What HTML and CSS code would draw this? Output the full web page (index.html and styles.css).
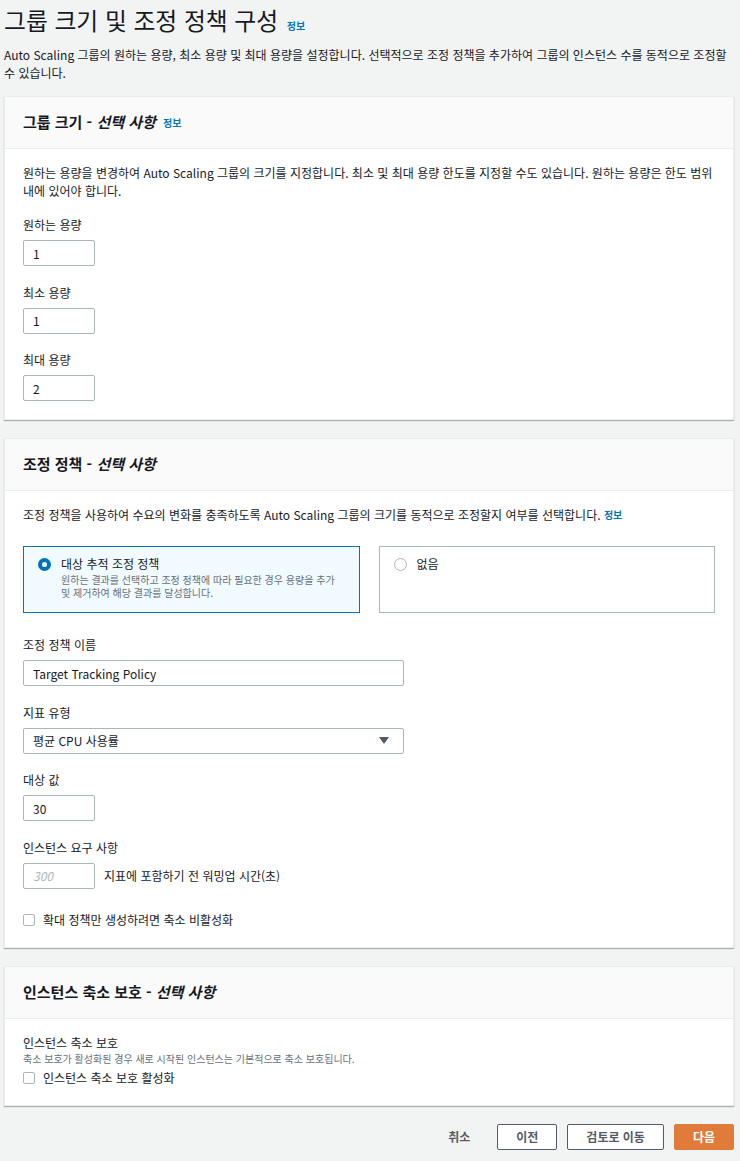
FILE: index.html
```html
<!DOCTYPE html>
<html lang="ko">
<head>
  <meta charset="UTF-8" />
  <meta name="viewport" content="width=device-width, initial-scale=1.0"/>
  <title>그룹 크기 및 조정 정책 구성</title>
  <link rel="stylesheet" href="styles.css">
</head>
<body>
  <div class="page">
    <h1 class="page-title">그룹 크기 및 조정 정책 구성 <a class="info" href="#">정보</a></h1>
    <p class="page-desc">Auto Scaling 그룹의 원하는 용량, 최소 용량 및 최대 용량을 설정합니다. 선택적으로 조정 정책을 추가하여 그룹의 인스턴스 수를 동적으로 조정할 수 있습니다.</p>

    <section class="card">
      <div class="card-header">
        <h2>그룹 크기 - <em>선택 사항</em> <a class="info" href="#">정보</a></h2>
      </div>
      <div class="card-body">
        <p class="desc">원하는 용량을 변경하여 Auto Scaling 그룹의 크기를 지정합니다. 최소 및 최대 용량 한도를 지정할 수도 있습니다. 원하는 용량은 한도 범위 내에 있어야 합니다.</p>
        <div class="field">
          <label>원하는 용량</label>
          <input class="input short" type="text" value="1">
        </div>
        <div class="field">
          <label>최소 용량</label>
          <input class="input short" type="text" value="1">
        </div>
        <div class="field">
          <label>최대 용량</label>
          <input class="input short" type="text" value="2">
        </div>
      </div>
    </section>

    <section class="card">
      <div class="card-header">
        <h2>조정 정책 - <em>선택 사항</em></h2>
      </div>
      <div class="card-body">
        <p class="desc">조정 정책을 사용하여 수요의 변화를 충족하도록 Auto Scaling 그룹의 크기를 동적으로 조정할지 여부를 선택합니다. <a class="info" href="#">정보</a></p>

        <div class="tiles">
          <div class="tile selected">
            <span class="radio on"></span>
            <div>
              <div class="tile-title">대상 추적 조정 정책</div>
              <div class="tile-desc">원하는 결과를 선택하고 조정 정책에 따라 필요한 경우 용량을 추가 및 제거하여 해당 결과를 달성합니다.</div>
            </div>
          </div>
          <div class="tile">
            <span class="radio"></span>
            <div>
              <div class="tile-title">없음</div>
            </div>
          </div>
        </div>

        <div class="field after-tiles">
          <label>조정 정책 이름</label>
          <input class="input wide" type="text" value="Target Tracking Policy">
        </div>
        <div class="field">
          <label>지표 유형</label>
          <div class="select wide">
            <span>평균 CPU 사용률</span>
            <span class="caret"></span>
          </div>
        </div>
        <div class="field">
          <label>대상 값</label>
          <input class="input short" type="text" value="30">
        </div>
        <div class="field">
          <label>인스턴스 요구 사항</label>
          <div class="inline">
            <input class="input short" type="text" placeholder="300">
            <span>지표에 포함하기 전 워밍업 시간(초)</span>
          </div>
        </div>
        <label class="check spaced"><span class="box"></span>확대 정책만 생성하려면 축소 비활성화</label>
      </div>
    </section>

    <section class="card">
      <div class="card-header">
        <h2>인스턴스 축소 보호 - <em>선택 사항</em></h2>
      </div>
      <div class="card-body">
        <div class="label">인스턴스 축소 보호</div>
        <div class="hint">축소 보호가 활성화된 경우 새로 시작된 인스턴스는 기본적으로 축소 보호됩니다.</div>
        <label class="check"><span class="box"></span>인스턴스 축소 보호 활성화</label>
      </div>
    </section>

    <div class="actions">
      <button class="btn link">취소</button>
      <button class="btn normal">이전</button>
      <button class="btn normal">검토로 이동</button>
      <button class="btn primary">다음</button>
    </div>
  </div>
</body>
</html>
```

FILE: styles.css
```css
:root {
  --bg: #f2f3f3;
  --text: #16191f;
  --muted: #687078;
  --border: #aab7b8;
  --blue: #0073bb;
  --orange: #e07b39;
}

body {
  margin: 0;
  background-color: var(--bg);
  color: var(--text);
  font-family: "Noto Sans CJK KR", "Noto Sans", sans-serif;
  font-size: 12px;
  line-height: 18px;
}

.page {
  padding: 0 6px 12px 4px;
}

.page-title {
  margin: 0;
  font-size: 23.8px;
  line-height: 40px;
  height: 40px;
  font-weight: 400;
}

.info {
  color: var(--blue);
  font-size: 10px;
  line-height: 1;
  font-weight: 700;
  text-decoration: none;
  vertical-align: 1px;
}

.page-title .info {
  margin-left: 2px;
  vertical-align: 0;
}

.page-desc {
  margin: 6px 0 14px;
}

.card {
  background-color: #fff;
  border: 1px solid #eaeded;
  box-shadow: 0 1px 1px rgba(0, 28, 36, 0.3);
  margin-bottom: 18px;
}

.card-header {
  background-color: #fafafa;
  border-bottom: 1px solid #eaeded;
  padding: 16px 18px 17px;
}

.card-header h2 {
  margin: 0;
  height: 18px;
  font-size: 15px;
  line-height: 18px;
  font-weight: 700;
}

.card-header .info {
  margin-left: 3px;
}

.card-body {
  padding: 15px 18px 18px;
}

.desc {
  margin: 0;
}

.field {
  margin-top: 16px;
}

.field + .field {
  margin-top: 17.5px;
}

.field.after-tiles {
  margin-top: 23px;
}

.field label,
.label {
  display: block;
}

.field label {
  margin-bottom: 6px;
}

.input {
  box-sizing: border-box;
  display: block;
  height: 26px;
  border: 1px solid var(--border);
  border-radius: 2px;
  padding: 0 9px;
  font-family: inherit;
  font-size: 12px;
  color: var(--text);
  background: #fff;
}

.input::placeholder {
  color: #aab7b8;
  font-style: italic;
}

.short {
  width: 72px;
}

.wide {
  width: 381px;
}

.select {
  box-sizing: border-box;
  height: 26px;
  border: 1px solid var(--border);
  border-radius: 2px;
  padding: 0 9px;
  display: flex;
  align-items: center;
  justify-content: space-between;
}

.caret {
  width: 0;
  height: 0;
  border-left: 5px solid transparent;
  border-right: 5px solid transparent;
  border-top: 7px solid #545b64;
  margin-right: 5px;
}

.inline {
  display: flex;
  align-items: center;
  gap: 9px;
}

.tiles {
  display: grid;
  grid-template-columns: 1fr 1fr;
  gap: 19px;
  margin-top: 22px;
}

.tile {
  display: flex;
  align-items: flex-start;
  gap: 10px;
  height: 67px;
  box-sizing: border-box;
  border: 1px solid var(--border);
  padding: 8px 14px;
  background: #fff;
}

.tile.selected {
  border-color: var(--blue);
  background-color: #f1faff;
}

.radio {
  flex: none;
  box-sizing: border-box;
  width: 13px;
  height: 13px;
  border-radius: 50%;
  border: 1px solid var(--border);
  background: #fff;
  margin-top: 3px;
}

.radio.on {
  border: 4px solid var(--blue);
}

.tile-desc {
  color: var(--muted);
  font-size: 10px;
  line-height: 13px;
}

.check {
  display: flex;
  align-items: center;
  gap: 8px;
}

.check.spaced {
  margin-top: 22px;
}

.box {
  box-sizing: border-box;
  width: 12px;
  height: 12px;
  border: 1px solid var(--border);
  border-radius: 2px;
  background: #fff;
}

.hint {
  color: var(--muted);
  font-size: 10px;
  line-height: 13px;
  margin-bottom: 4px;
}

.actions {
  display: flex;
  justify-content: flex-end;
  align-items: center;
  gap: 10px;
}

.btn {
  height: 26px;
  box-sizing: border-box;
  border-radius: 2px;
  font-family: inherit;
  font-size: 12px;
  font-weight: 700;
  padding: 0 18px;
  cursor: pointer;
}

.btn.link {
  border: none;
  background: none;
  color: #545b64;
  padding: 0 9px;
  margin-right: 8px;
}

.btn.normal {
  border: 1px solid #545b64;
  background: #fff;
  color: #545b64;
}

.btn.primary {
  border: 1px solid var(--orange);
  background-color: var(--orange);
  color: #fff;
}
```
